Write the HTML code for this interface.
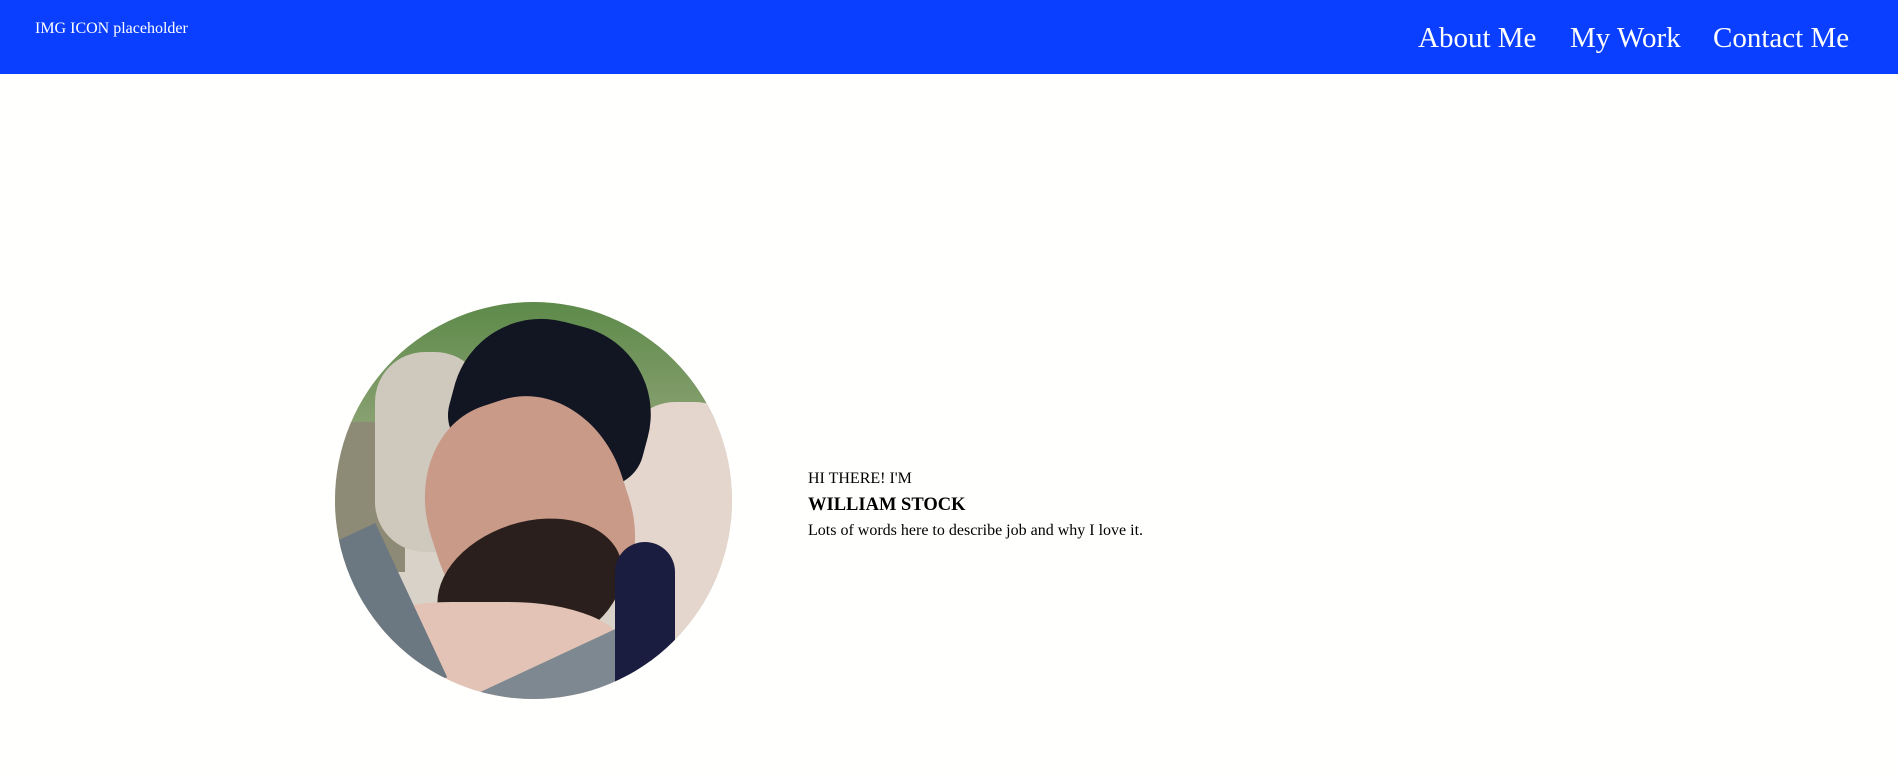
<!DOCTYPE html>
<html><head><style>
body{margin:0;width:1898px;height:773px;background:#fffffd;font-family:"Liberation Serif",serif;position:relative;overflow:hidden}
.hdr{position:absolute;left:0;top:0;width:1898px;height:74px;background:#0a3fff}
.logo{position:absolute;left:35px;top:20px;color:#fff;font-size:16px}
.nav{position:absolute;top:24px;color:#fff;font-size:29px;line-height:1}
.t{position:absolute;left:808px;color:#000;white-space:nowrap}
.pic{position:absolute;left:335px;top:302px;width:397px;height:397px;border-radius:50%;overflow:hidden;background:#d9d2c8}
.pic div{position:absolute}
</style></head><body>
<div class="hdr">
<div class="logo">IMG ICON placeholder</div>
<div class="nav" style="left:1418px">About Me</div>
<div class="nav" style="left:1570px">My Work</div>
<div class="nav" style="left:1713px">Contact Me</div>
</div>
<div class="pic">
<div style="left:0;top:0;width:397px;height:120px;background:linear-gradient(#5d8a4a,#88a070)"></div>
<div style="left:0;top:120px;width:70px;height:150px;background:#8d8a75"></div>
<div style="left:40px;top:50px;width:110px;height:200px;border-radius:50px;background:#cfc8bc"></div>
<div style="left:290px;top:100px;width:120px;height:290px;border-radius:50px;background:#e4d6cc"></div>
<div style="left:120px;top:20px;width:200px;height:150px;border-radius:90px 90px 40px 40px;background:#121522;transform:rotate(15deg)"></div>
<div style="left:95px;top:95px;width:200px;height:240px;border-radius:45%;background:#c99a88;transform:rotate(-18deg)"></div>
<div style="left:100px;top:220px;width:190px;height:130px;border-radius:50%;background:#2a1f1c;transform:rotate(-18deg)"></div>
<div style="left:0;top:300px;width:290px;height:120px;border-radius:40%;background:#e2c3b5"></div>
<div style="left:0;top:230px;width:80px;height:170px;background:#6c7881;transform:rotate(-25deg)"></div>
<div style="left:130px;top:350px;width:220px;height:80px;background:#7d8891;transform:rotate(-25deg)"></div>
<div style="left:280px;top:240px;width:60px;height:170px;background:#1a1d40;border-radius:30px"></div>
</div>
<div class="t" style="top:470px;font-size:16px">HI THERE! I'M</div>
<div class="t" style="top:495px;font-size:18.5px;font-weight:bold">WILLIAM STOCK</div>
<div class="t" style="top:522px;font-size:16px">Lots of words here to describe job and why I love it.</div>
</body></html>
